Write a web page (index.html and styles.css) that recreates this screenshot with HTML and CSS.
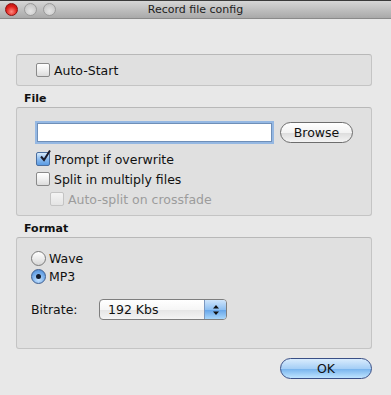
FILE: index.html
```html
<!DOCTYPE html>
<html lang="en">
<head>
    <meta charset="UTF-8">
    <title>Record file config</title>
    <link rel="stylesheet" href="styles.css">
</head>
<body>
    <div class="window">
        <div class="titlebar">
            <div class="lights">
                <span class="light red"></span>
                <span class="light"></span>
                <span class="light"></span>
            </div>
            <div class="title">Record file config</div>
        </div>

        <div class="content">
            <div class="box box-start">
                <label class="check"><span class="cb"></span>Auto-Start</label>
            </div>

            <div class="group-label">File</div>
            <div class="box box-file">
                <div class="file-row">
                    <input type="text" class="field">
                    <button class="btn">Browse</button>
                </div>
                <label class="check row"><span class="cb checked"><svg viewBox="0 0 14 14" width="14" height="14"><path d="M3 7.5 L6 11 L12 1.5" fill="none" stroke="#1b1b2b" stroke-width="2"/></svg></span>Prompt if overwrite</label>
                <label class="check row"><span class="cb"></span>Split in multiply files</label>
                <label class="check row sub disabled"><span class="cb"></span>Auto-split on crossfade</label>
            </div>

            <div class="group-label">Format</div>
            <div class="box box-format">
                <label class="radio-row"><span class="rb"></span>Wave</label>
                <label class="radio-row"><span class="rb on"></span>MP3</label>
                <div class="bitrate">
                    <span class="bitrate-label">Bitrate:</span>
                    <div class="popup">
                        <span class="popup-value">192 Kbs</span>
                        <span class="popup-arrows">
                            <svg viewBox="0 0 8 12" width="8" height="12"><path d="M4 1 L7 4.5 L1 4.5 Z M4 11 L7 7.5 L1 7.5 Z" fill="#111"/></svg>
                        </span>
                    </div>
                </div>
            </div>

            <div class="footer">
                <button class="btn btn-ok">OK</button>
            </div>
        </div>
    </div>
</body>
</html>
```

FILE: styles.css
```css
body {
    margin: 0;
    background-color: #e8e8e8;
    font-family: 'DejaVu Sans', 'Liberation Sans', sans-serif;
    font-size: 12.5px;
    color: #111;
}
.window {
    width: 391px;
    height: 395px;
    overflow: hidden;
    background-color: #e8e8e8;
}
.titlebar {
    position: relative;
    height: 17px;
    border-top: 1px solid #3a3a3a;
    border-bottom: 1px solid #8a8a8a;
    background: linear-gradient(#d6d6d6, #a9a9a9);
    display: flex;
    align-items: center;
    justify-content: center;
}
.lights {
    position: absolute;
    left: 5px;
    top: 2px;
    display: flex;
    gap: 6px;
}
.light {
    width: 11px;
    height: 11px;
    border-radius: 50%;
    border: 1px solid #9a9a9a;
    background: radial-gradient(circle at 50% 65%, #e4e4e4, #bdbdbd);
}
.light.red {
    border-color: #8c1010;
    background: radial-gradient(circle at 50% 70%, #ff8a80, #e0201a 55%, #a80d0a);
}
.title {
    font-size: 11px;
    color: #1c1c1c;
}
.content {
    padding: 35px 19px 0 16px;
}
.box {
    background-color: #e0e0e0;
    border: 1px solid #c4c4c4;
    border-top-color: #b8b8b8;
    border-radius: 3px;
}
.box-start {
    height: 30px;
    display: flex;
    align-items: center;
    padding-left: 19px;
}
.check, .radio-row {
    display: flex;
    align-items: center;
    gap: 4px;
}
.cb {
    width: 12px;
    height: 12px;
    border: 1px solid #8a8a8a;
    border-radius: 2px;
    background: linear-gradient(#ffffff, #f0f0f0 50%, #dcdcdc);
    position: relative;
    flex: none;
}
.cb.checked {
    border-color: #4a6ea0;
    background: linear-gradient(#d8ebfc, #8cbcef 50%, #5a9be3);
}
.cb svg {
    position: absolute;
    left: 1px;
    top: -4px;
}
.group-label {
    font-weight: bold;
    font-size: 11px;
    padding: 6px 0 2px 8px;
    line-height: 13px;
}
.box-file {
    height: 107px;
    padding: 0 18px;
}
.file-row {
    display: flex;
    align-items: center;
    gap: 8px;
    margin: 14px 0 6px;
}
.field {
    width: 235px;
    height: 19px;
    box-sizing: border-box;
    border: 1px solid #6f8fb8;
    box-shadow: 0 0 0 2px #95b8e3;
    background: #fff;
    margin: 0 0 0 2px;
    padding: 0;
    outline: none;
}
.btn {
    font-family: inherit;
    font-size: 12.5px;
    height: 21px;
    width: 73px;
    border: 1px solid #6d6d6d;
    border-radius: 11px;
    background: linear-gradient(#ffffff, #f3f3f3 50%, #dedede 55%, #f4f4f4);
    color: #111;
    padding: 0;
}
.row {
    height: 20px;
    margin-left: 1px;
}
.sub {
    margin-left: 15px;
}
.disabled {
    color: #9c9c9c;
}
.disabled .cb {
    border-color: #c4c4c4;
    background: linear-gradient(#f4f4f4, #e4e4e4);
}
.box-format {
    padding: 11px 14px 0;
    box-sizing: border-box;
    height: 112px;
}
.rb {
    width: 13px;
    height: 13px;
    border-radius: 50%;
    border: 1px solid #7a7a7a;
    background: linear-gradient(#ffffff, #ececec 50%, #d6d6d6);
    flex: none;
    position: relative;
}
.rb.on {
    border-color: #3f5f90;
    background: radial-gradient(circle at 50% 75%, #c8e4ff, #6fa8e8 60%, #4a86d0);
}
.rb.on::after {
    content: "";
    position: absolute;
    left: 4px;
    top: 4px;
    width: 5px;
    height: 5px;
    border-radius: 50%;
    background: #141c2c;
}
.radio-row {
    height: 18px;
    gap: 3px;
}
.bitrate {
    display: flex;
    align-items: center;
    margin-top: 14px;
}
.bitrate-label {
    width: 68px;
}
.popup {
    width: 126px;
    height: 19px;
    border: 1px solid #7e7e7e;
    border-radius: 4px;
    display: flex;
    background: linear-gradient(#ffffff, #f6f6f6 50%, #e6e6e6 55%, #f4f4f4);
    overflow: hidden;
}
.popup-value {
    flex: 1;
    padding-left: 8px;
    line-height: 19px;
}
.popup-arrows {
    width: 21px;
    border-left: 1px solid #7b98c0;
    background: linear-gradient(#cfe5fb, #8fc0f2 50%, #68a7ea 55%, #a8d6fb);
    display: flex;
    align-items: center;
    justify-content: center;
}
.footer {
    display: flex;
    justify-content: flex-end;
    margin-top: 9px;
}
.btn-ok {
    width: 92px;
    border-color: #3a4f86;
    background: linear-gradient(#d9ecfd, #a6cff6 50%, #7bb6ee 55%, #bfe4ff);
}
```
